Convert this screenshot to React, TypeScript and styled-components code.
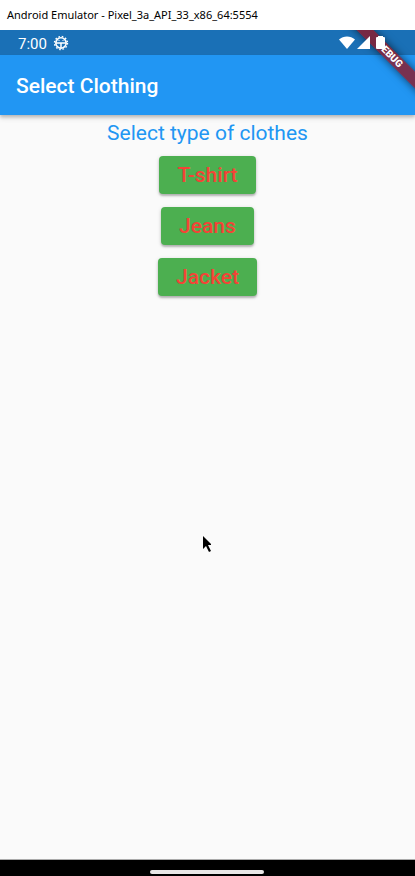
import React from "react";
import styled, { createGlobalStyle } from "styled-components";

const GlobalStyle = createGlobalStyle`
  *, *::before, *::after { box-sizing: border-box; }
  body {
    margin: 0;
    background: #fafafa;
    font-family: Roboto, sans-serif;
  }
`;

const EmulatorWindow = styled.div`
  display: flex;
  flex-direction: column;
  min-height: 100vh;
`;

const WindowTitle = styled.header`
  height: 30px;
  padding: 0 7px;
  background: #fff;
  color: #000;
  font: 11px/30px "Noto Sans", "Open Sans", sans-serif;
  white-space: nowrap;
`;

const Screen = styled.div`
  position: relative;
  flex: 1;
  display: flex;
  flex-direction: column;
  overflow: hidden;
  background: #fafafa;
`;

const StatusBar = styled.div`
  display: flex;
  align-items: center;
  height: 25px;
  padding: 0 29px 0 18px;
  background: #1a70b6;
  color: #fff;
`;

const Clock = styled.time`
  margin-right: 6px;
  font-size: 15px;
  line-height: 24px;
  padding-top: 2px;
`;

const StatusIcons = styled.div`
  position: relative;
  z-index: 3;
  display: flex;
  align-items: center;
  margin-left: auto;
`;

const AppBar = styled.header`
  display: flex;
  align-items: center;
  height: 60px;
  padding: 2px 16px 0;
  background: #2196f3;
  box-shadow: 0 2px 3px rgba(0, 0, 0, 0.2), 0 4px 5px rgba(0, 0, 0, 0.09);
`;

const AppTitle = styled.h1`
  margin: 0;
  color: #fff;
  font-size: 21px;
  font-weight: 500;
  line-height: 28px;
`;

const RibbonCorner = styled.div`
  position: absolute;
  z-index: 2;
  top: 0;
  right: 0;
  width: 72px;
  height: 72px;
  overflow: hidden;
  pointer-events: none;
`;

const Ribbon = styled.div`
  position: absolute;
  top: 20px;
  left: -12px;
  width: 120px;
  height: 12px;
  padding-right: 4px;
  transform: rotate(45deg);
  background: rgba(142, 24, 39, 0.8);
  box-shadow: 0 0 8px rgba(0, 0, 0, 0.6);
  color: #fff;
  font-size: 10px;
  font-weight: 900;
  line-height: 12px;
  text-align: center;
`;

const Content = styled.main`
  flex: 1;
  display: flex;
  flex-direction: column;
  align-items: center;
  padding-top: 4px;
`;

const Prompt = styled.h2`
  margin: 0 0 9px;
  color: #2196f3;
  font-size: 21px;
  font-weight: 400;
  line-height: 28px;
`;

const Choices = styled.div`
  display: flex;
  flex-direction: column;
  align-items: center;
  gap: 13px;
`;

const ChoiceButton = styled.button`
  height: 38px;
  padding: 1px 18px 0;
  border: 0;
  border-radius: 4px;
  background: #4caf50;
  box-shadow: 0 2px 2px rgba(0, 0, 0, 0.22), 0 1px 4px rgba(0, 0, 0, 0.14);
  color: #f44336;
  font: 500 21px/37px Roboto, sans-serif;
  cursor: pointer;
`;

const NavigationBar = styled.footer`
  display: flex;
  justify-content: center;
  align-items: flex-end;
  height: 17px;
  padding: 0 2px 2px 0;
  border-top: 1px solid #aaa;
  background: #000;
`;

const HomeHandle = styled.div`
  width: 114px;
  height: 4px;
  border-radius: 2px;
  background: #e8e6e6;
`;

const Pointer = styled.svg`
  position: absolute;
  top: 506px;
  left: 203px;
`;

const choices = ["T-shirt", "Jeans", "Jacket"];

const DebugIcon = () => (
  <svg width="16" height="16" viewBox="0 0 16 16" fill="none" stroke="#fff" aria-hidden="true">
    <circle cx="8" cy="8" r="5.2" strokeWidth="1.6" />
    <circle cx="8" cy="8" r="6.5" strokeWidth="1.4" strokeDasharray="1.6 1.8" />
    <path d="M3 8h10M8 8v5" strokeWidth="1.5" />
    <path d="M6 5v1M10 5v1" strokeWidth="1" />
  </svg>
);

const WifiIcon = () => (
  <svg width="17" height="14" viewBox="0 0 17 14" fill="#fff" aria-hidden="true">
    <path d="M0 3.5C4.5-.5 11.5-.5 16 3.5L8 13Z" />
  </svg>
);

const SignalIcon = () => (
  <svg width="14" height="14" viewBox="0 0 14 14" fill="#fff" aria-hidden="true">
    <path d="M14 0V13H1Z" />
  </svg>
);

const BatteryIcon = () => (
  <svg width="16" height="14" viewBox="0 0 16 14" fill="#fff" aria-hidden="true">
    <path d="M8 0h5v1h1q1 0 1 1V12q0 1-1 1H7q-1 0-1-1V2q0-1 1-1h1Z" />
  </svg>
);

export default function App() {
  return (
    <EmulatorWindow>
      <GlobalStyle />
      <WindowTitle>Android Emulator - Pixel_3a_API_33_x86_64:5554</WindowTitle>
      <Screen>
        <StatusBar>
          <Clock>7:00</Clock>
          <DebugIcon />
          <StatusIcons>
            <WifiIcon />
            <SignalIcon />
            <BatteryIcon />
          </StatusIcons>
        </StatusBar>
        <AppBar>
          <AppTitle>Select Clothing</AppTitle>
        </AppBar>
        <RibbonCorner>
          <Ribbon>DEBUG</Ribbon>
        </RibbonCorner>
        <Content>
          <Prompt>Select type of clothes</Prompt>
          <Choices>
            {choices.map((choice) => (
              <ChoiceButton key={choice} type="button">
                {choice}
              </ChoiceButton>
            ))}
          </Choices>
        </Content>
        <Pointer width="10" height="17" viewBox="0 0 10 17" aria-hidden="true">
          <path d="M0 0L8 8v1H5l3 6-2 1-3-6-3 3Z" fill="#000" />
        </Pointer>
      </Screen>
      <NavigationBar>
        <HomeHandle />
      </NavigationBar>
    </EmulatorWindow>
  );
}
